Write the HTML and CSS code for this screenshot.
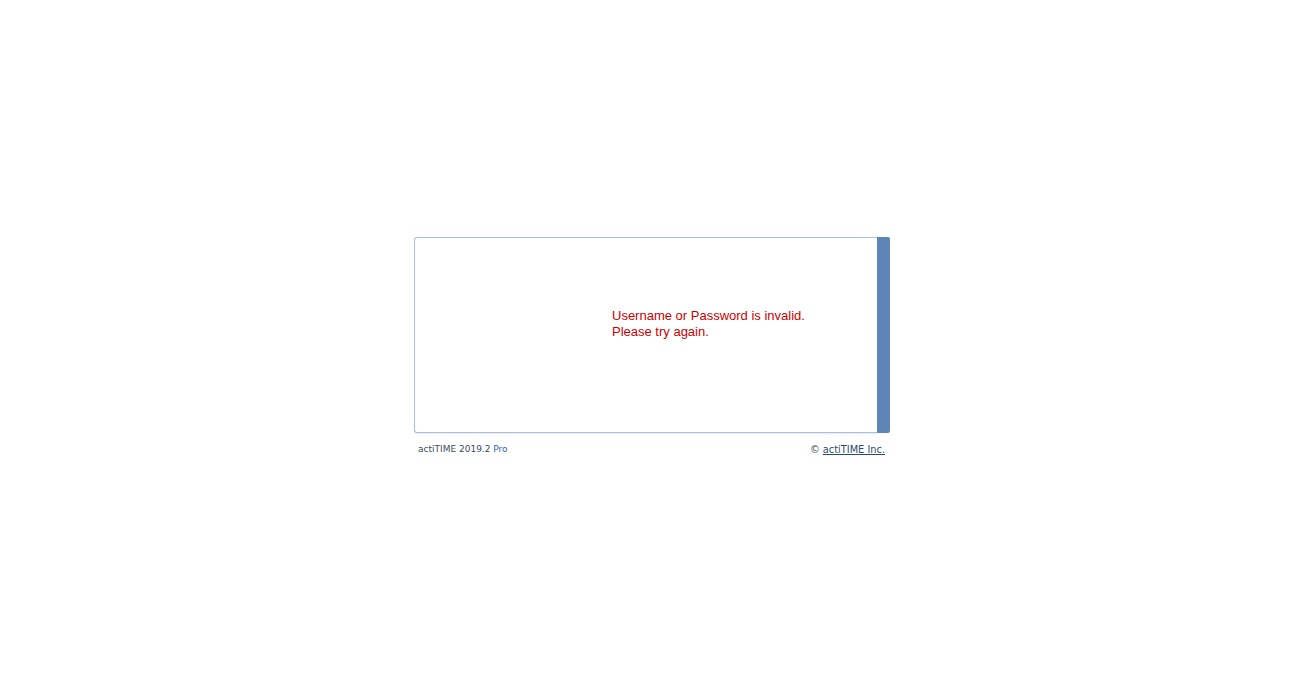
FILE: index.html
```html
<!DOCTYPE html>
<html>
<head>
<meta charset="utf-8">
<link rel="stylesheet" href="styles.css">
</head>
<body>
<div class="wrap">
  <div class="panel">
    <div class="content">
      <div class="error">Username or Password is invalid.<br>Please try again.</div>
    </div>
    <div class="bar"></div>
  </div>
  <div class="footer">
    <div class="version">actiTIME 2019.2 <span class="edition">Pro</span></div>
    <div class="copy">&copy; <a href="#">actiTIME Inc.</a></div>
  </div>
</div>
</body>
</html>
```
FILE: styles.css
```css
html, body {
  margin: 0;
  padding: 0;
  background: #ffffff;
}
.wrap {
  width: 476px;
  margin: 237px auto 0;
}
.panel {
  display: flex;
  height: 196px;
}
.content {
  flex: 1;
  border: 1px solid #aebfdd;
  border-right: none;
  border-radius: 3px 0 0 3px;
  padding: 70px 0 0 197px;
  box-shadow: 0 1px 1px rgba(120,140,180,0.2);
}
.bar {
  width: 13px;
  background: #5d86b6;
  border-radius: 0 2px 2px 0;
}
.error {
  font-family: "Liberation Sans", Arial, sans-serif;
  font-size: 13px;
  line-height: 16px;
  color: #cc0000;
}
.footer {
  display: flex;
  justify-content: space-between;
  padding: 10px 5px 0 4px;
  font-family: "DejaVu Sans", Verdana, sans-serif;
  font-size: 9px;
  line-height: 12px;
}
.version {
  color: #3c4a5c;
}
.edition {
  color: #1f64b0;
}
.copy {
  color: #3c4a5c;
  padding-top: 1px;
  font-size: 9.8px;
}
.copy a {
  color: #2b4a70;
  text-decoration: underline;
}
```
